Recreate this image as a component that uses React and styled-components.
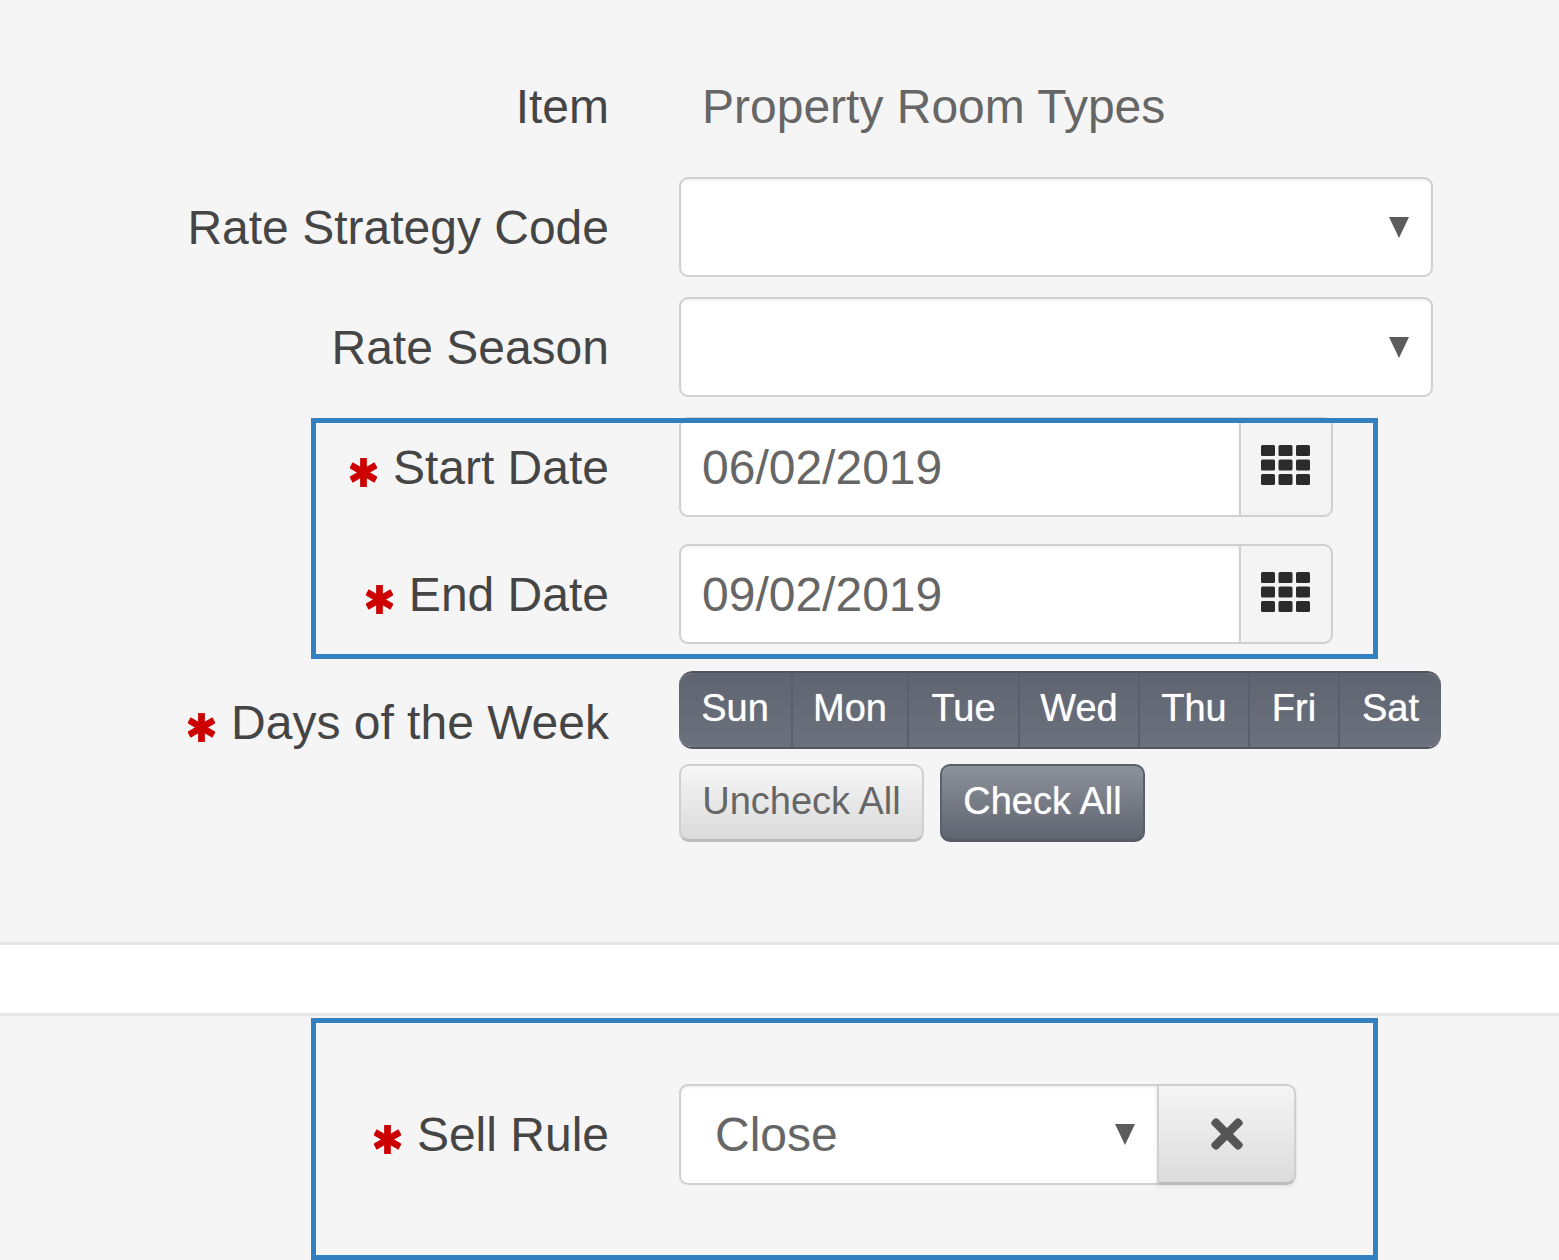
import React from "react"
import styled, { createGlobalStyle } from "styled-components"
import { FaTimes } from "react-icons/fa"

const GlobalStyle = createGlobalStyle`
  html, body {
    margin: 0;
    padding: 0;
    background: #f5f5f5;
  }
  body {
    font-family: "Liberation Sans", Arial, sans-serif;
    color: #444;
  }
`

const Page = styled.div`
  position: relative;
  width: 1559px;
  height: 1260px;
  overflow: hidden;
`

const Panel = styled.section`
  height: 942px;
  box-sizing: border-box;
  padding-top: 57px;
  display: flex;
  flex-direction: column;
`

const Divider = styled.div`
  height: 74px;
  box-sizing: border-box;
  background: #fff;
  border-top: 3px solid #e6e6e6;
  border-bottom: 3px solid #e6e6e6;
`

const BottomPanel = styled.section`
  padding-top: 68px;
`

const Row = styled.div`
  display: grid;
  grid-template-columns: 609px 1fr;
  column-gap: 70px;
  align-items: ${(p) => (p.$top ? "start" : "center")};
  margin-bottom: ${(p) => p.$gap ?? 20}px;
`

const Label = styled.label`
  display: flex;
  justify-content: flex-end;
  align-items: center;
  height: ${(p) => p.$height ?? 100}px;
  font-size: 48px;
  color: #454545;
  white-space: nowrap;
`

const Star = styled.svg`
  width: 27px;
  height: 31px;
  margin: 10px 16px 0 0;
  flex: none;
`

const Static = styled.div`
  padding-left: 23px;
  font-size: 48px;
  color: #666;
`

const Field = styled.div`
  display: flex;
  align-items: center;
  justify-content: space-between;
  box-sizing: border-box;
  width: ${(p) => p.$width}px;
  height: ${(p) => p.$height ?? 100}px;
  padding: 0 22px 0 ${(p) => p.$indent ?? 21}px;
  background: #fff;
  border: 2px solid #d0d0d0;
  border-radius: ${(p) => (p.$joined ? "9px 0 0 9px" : "9px")};
  border-right-width: ${(p) => (p.$joined ? 0 : 2)}px;
  box-shadow: inset 0 2px 2px rgba(0, 0, 0, 0.05);
  font-size: 48px;
  color: #666;
`

const Caret = styled.span`
  width: 0;
  height: 0;
  border-left: 10px solid transparent;
  border-right: 10px solid transparent;
  border-top: 21px solid #5c5c5c;
`

const Group = styled.div`
  display: flex;
`

const Addon = styled.div`
  display: flex;
  align-items: center;
  justify-content: center;
  box-sizing: border-box;
  width: 94px;
  height: 100px;
  padding-bottom: 4px;
  background: #f4f4f4;
  border: 2px solid #d0d0d0;
  border-radius: 0 9px 9px 0;
`

const GridIcon = styled.svg`
  width: 50px;
  height: 40px;
  fill: #2b2b2b;
`

const ClearButton = styled.button`
  display: flex;
  align-items: center;
  justify-content: center;
  box-sizing: border-box;
  width: 139px;
  height: 101px;
  padding: 0;
  color: #555;
  font-size: 46px;
  background: linear-gradient(#f5f5f5, #dcdcdc);
  border: 2px solid #d0d0d0;
  border-bottom: 3px solid #bdbdbd;
  border-radius: 0 9px 9px 0;
  box-shadow: 0 2px 4px rgba(0, 0, 0, 0.08);
`

const Days = styled.div`
  display: flex;
  width: 762px;
  height: 78px;
  border-radius: 14px;
  overflow: hidden;
  border-top: 2px solid #4f545d;
  border-bottom: 2px solid #51565f;
  box-sizing: border-box;
  margin-bottom: 15px;
`

const Day = styled.div`
  display: flex;
  align-items: center;
  justify-content: center;
  box-sizing: border-box;
  width: ${(p) => p.$width}px;
  padding-bottom: 4px;
  font-size: 38px;
  color: #fff;
  text-shadow: 0 0 1px rgba(255, 255, 255, 0.7);
  background: linear-gradient(#5f6570, #6c727d);
  border-right: 2px solid #5a5f69;
  &:last-child {
    border-right: 0;
  }
`

const Actions = styled.div`
  display: flex;
  gap: 16px;
`

const ActionButton = styled.button`
  box-sizing: border-box;
  height: 78px;
  width: ${(p) => p.$width}px;
  padding: 0 0 2px;
  font-family: inherit;
  font-size: 38px;
  border-radius: 10px;
  color: ${(p) => (p.$dark ? "#fff" : "#666")};
  text-shadow: ${(p) => (p.$dark ? "0 0 1px rgba(255, 255, 255, 0.7)" : "none")};
  background: ${(p) =>
    p.$dark ? "linear-gradient(#8c919b, #5f6570)" : "linear-gradient(#f6f6f6, #dadada)"};
  border: 2px solid ${(p) => (p.$dark ? "#5b606a" : "#cfcfcf")};
  border-bottom: 3px solid ${(p) => (p.$dark ? "#565b64" : "#bcbcbc")};
`

const Highlight = styled.div`
  position: absolute;
  left: 311px;
  top: ${(p) => p.$top}px;
  width: 1067px;
  height: ${(p) => p.$height}px;
  box-sizing: border-box;
  border: 5px solid #3280c0;
  pointer-events: none;
`

const DAYS = [
  ["Sun", 114],
  ["Mon", 116],
  ["Tue", 111],
  ["Wed", 120],
  ["Thu", 110],
  ["Fri", 90],
  ["Sat", 101],
]

const Required = () => (
  <Star viewBox="0 0 28 32">
    <g stroke="#cc0000" strokeWidth="7">
      <path d="M14 1v30" />
      <path d="M1 8.5l26 15" />
      <path d="M27 8.5l-26 15" />
    </g>
  </Star>
)

const CalendarGrid = () => (
  <GridIcon viewBox="0 0 50 40">
    {[0, 1, 2].map((row) =>
      [0, 1, 2].map((col) => (
        <rect key={`${row}-${col}`} x={col * 17.5} y={row * 14.5} width="14" height="11" rx="1.5" />
      ))
    )}
  </GridIcon>
)

const DateField = ({ value }) => (
  <Group>
    <Field $width={560} $joined>{value}</Field>
    <Addon>
      <CalendarGrid />
    </Addon>
  </Group>
)

const App = () => {
  return (
    <Page>
      <GlobalStyle />
      <Panel>
        <Row $gap={22}>
          <Label $height={98}>Item</Label>
          <Static>Property Room Types</Static>
        </Row>
        <Row>
          <Label>Rate Strategy Code</Label>
          <Field $width={754}>
            <span />
            <Caret />
          </Field>
        </Row>
        <Row>
          <Label>Rate Season</Label>
          <Field $width={754}>
            <span />
            <Caret />
          </Field>
        </Row>
        <Row $gap={27}>
          <Label>
            <Required />
            Start Date
          </Label>
          <DateField value="06/02/2019" />
        </Row>
        <Row $gap={27}>
          <Label>
            <Required />
            End Date
          </Label>
          <DateField value="09/02/2019" />
        </Row>
        <Row $top>
          <Label $height={102}>
            <Required />
            Days of the Week
          </Label>
          <div>
            <Days>
              {DAYS.map(([name, width]) => (
                <Day key={name} $width={width}>{name}</Day>
              ))}
            </Days>
            <Actions>
              <ActionButton $width={245}>Uncheck All</ActionButton>
              <ActionButton $width={205} $dark>Check All</ActionButton>
            </Actions>
          </div>
        </Row>
      </Panel>
      <Divider />
      <BottomPanel>
        <Row>
          <Label $height={101}>
            <Required />
            Sell Rule
          </Label>
          <Group>
            <Field $width={478} $height={101} $indent={34} $joined>
              Close
              <Caret />
            </Field>
            <ClearButton>
              <FaTimes />
            </ClearButton>
          </Group>
        </Row>
      </BottomPanel>
      <Highlight $top={418} $height={241} />
      <Highlight $top={1018} $height={242} />
    </Page>
  )
}

export default App
